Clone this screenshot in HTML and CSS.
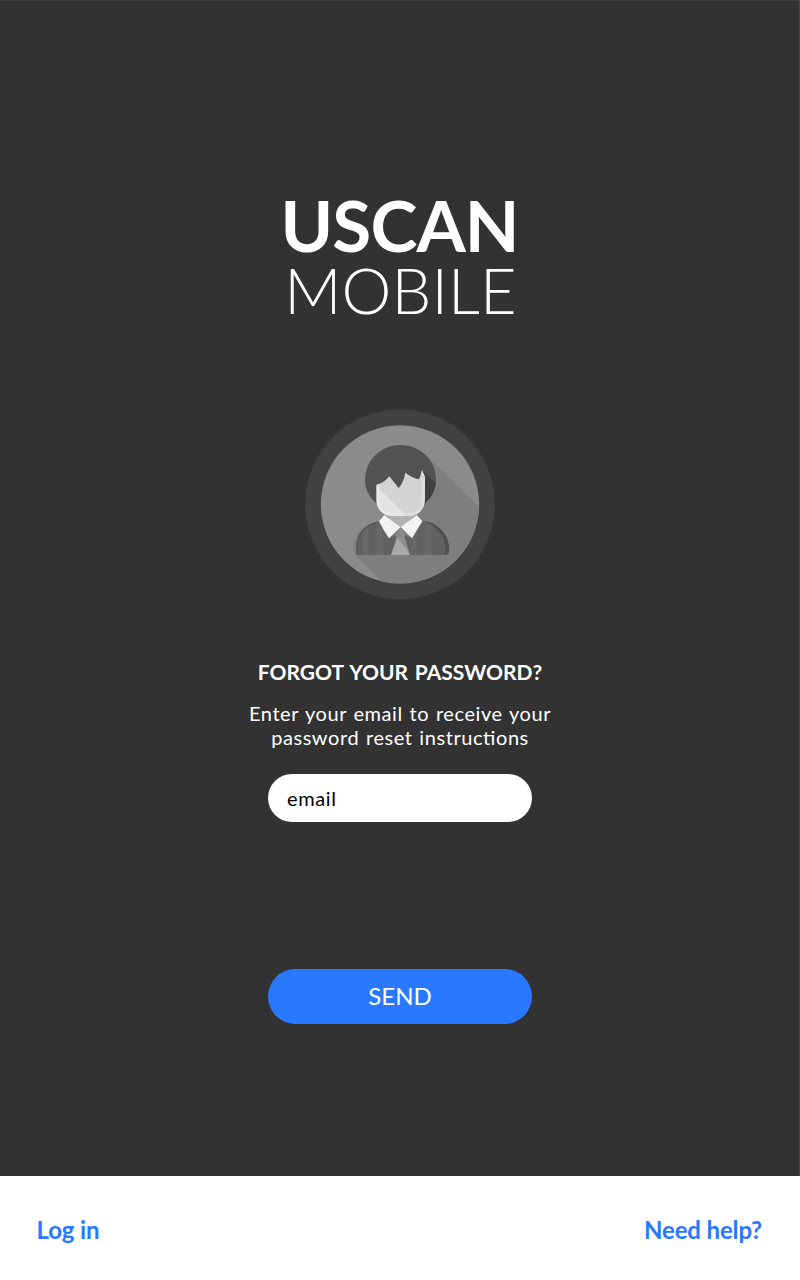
FILE: index.html
```html
<!DOCTYPE html>
<html lang="en">
<head>
<meta charset="utf-8">
<title>Uscan Mobile</title>
<link rel="stylesheet" href="styles.css">
</head>
<body>
<main class="screen">
  <h1 class="logo"><span class="logo-top">USCAN</span><span class="logo-bottom">MOBILE</span></h1>
  <svg class="avatar" viewBox="0 0 600 600" aria-hidden="true">
    <defs>
      <clipPath id="disc"><circle cx="300" cy="301" r="237.500"/></clipPath>
      <clipPath id="face"><path d="M229 242Q252 238 268 217L296 252Q311 235 316 206Q336 222 357 226Q362 214 366 198L375 218V287Q372 337 318 337H288Q232 337 229 287Z"/></clipPath>
      <clipPath id="coat"><path d="M158 453V431C158 390 195 353 240 351L267 401L290 392L273 453ZM330 453L312 392L336 401L366 351C411 353 447 390 447 431V442Q447 453 436 453Z"/></clipPath>
    </defs>
    <circle cx="300" cy="301" r="285" fill="#414141"/>
    <g clip-path="url(#disc)">
      <rect x="60" y="60" width="480" height="480" fill="#8b8b8b"/>
      <path d="M377 150L620 393V600H310L167 453L250 330Z" fill="#7e7e7e"/>
    </g>
    <path d="M229 298C207 279 195 255 195 229C195 169 242 123 301 123C361 123 408 169 408 229C408 256 395 280 374 298Z" fill="#525252"/>
    <path d="M366 198L407 238C404 263 393 283 374 298Z" fill="#424242"/>
    <path d="M253 326H351V340L301 370L251 340Z" fill="#b1b1b1"/>
    <g clip-path="url(#face)">
      <rect x="225" y="190" width="155" height="150" fill="#d3d3d3"/>
      <path d="M225 240L325 340H225Z" fill="#e3e3e3"/>
      <path d="M229 240V287Q232 337 288 337H318Q372 337 375 287V190" fill="none" stroke="#f1f1f1" stroke-opacity=".42" stroke-width="20"/>
    </g>
    <g clip-path="url(#coat)">
      <rect x="155" y="345" width="295" height="110" fill="#616161"/>
      <path d="M187 350h19v105h-19zM230 350h21v105h-21zM332 350h19v105h-19zM375 350h20v105h-20z" fill="#686868"/>
      <path d="M158 455V431C158 390 195 351 240 351Q172 370 171 425V455Z" fill="#808080"/>
      <path d="M171 455V428Q171 372 235 352" fill="none" stroke="#555" stroke-width="4"/>
      <path d="M366 351C420 353 447 390 447 431V455H431Q439 444 434 421Q426 371 366 351Z" fill="#515151"/>
    </g>
    <path d="M168 453Q157 453 158 442V431C159 390 194 355 238 351" fill="none" stroke="#979797" stroke-width="2"/>
    <path d="M301 370L317 388L312 404H290L286 388Z" fill="#8b8b8b"/>
    <path d="M292 403L273 453H330L312 403Z" fill="#aaa"/>
    <path d="M291 402H312L330 453L320 435Z" fill="#909090"/>
    <path d="M252 334L302 369L267 403Q252 382 237 352ZM351 334L302 369L336 403L367 352Z" fill="#f2f2f2"/>
  </svg>
  <h2 class="title">FORGOT YOUR PASSWORD?</h2>
  <p class="hint">Enter your email to receive your<br>password reset instructions</p>
  <div class="field">email</div>
  <div class="send">SEND</div>
</main>
<footer class="footer"><a class="link">Log in</a><a class="link">Need help?</a></footer>
</body>
</html>
```
FILE: styles.css
```css
body {
  margin: 0;
  width: 800px;
  height: 1280px;
  display: flex;
  flex-direction: column;
  background: #fff;
  font-family: Lato, "Open Sans", sans-serif;
  color: #fff;
}
.screen {
  box-sizing: border-box;
  height: 1176px;
  padding-top: 193px;
  display: flex;
  flex-direction: column;
  align-items: center;
  background: #323232;
  box-shadow: inset -1px 1px #414141;
}
.logo {
  margin: 0;
  display: flex;
  flex-direction: column;
  align-items: center;
}
.logo-top {
  font-size: 71px;
  font-weight: 700;
  line-height: 64px;
  letter-spacing: -0.9px;
  margin-right: 0.8px;
}
.logo-bottom {
  font-size: 63px;
  font-weight: 300;
  line-height: 64px;
  margin-top: 1px;
  letter-spacing: 0.15px;
  margin-right: -1px;
}
.avatar {
  width: 200px;
  height: 200px;
  margin-top: 82px;
  flex: none;
}
.title {
  margin: 56px 0 0;
  font-size: 21px;
  line-height: 24px;
  font-weight: 700;
  word-spacing: 1.6px;
}
.hint {
  margin: 17px 0 0;
  font-size: 20px;
  line-height: 24px;
  letter-spacing: 0.57px;
  word-spacing: 1.1px;
  text-align: center;
  font-feature-settings: "liga" 1;
}
.field {
  box-sizing: border-box;
  width: 264px;
  height: 48px;
  margin-top: 25px;
  padding-left: 19px;
  border-radius: 24px;
  background: #fff;
  color: #000;
  font-size: 20px;
  line-height: 49px;
  letter-spacing: 0.6px;
}
.send {
  width: 264px;
  height: 55px;
  margin-top: 147px;
  border-radius: 27.5px;
  background: #2979ff;
  font-size: 24px;
  line-height: 53px;
  text-align: center;
}
.footer {
  box-sizing: border-box;
  height: 104px;
  padding: 2px 38px 0 36.5px;
  display: flex;
  align-items: center;
  justify-content: space-between;
}
.link {
  color: #2979ff;
  font-size: 24px;
  font-weight: 700;
  letter-spacing: -0.15px;
}
```
